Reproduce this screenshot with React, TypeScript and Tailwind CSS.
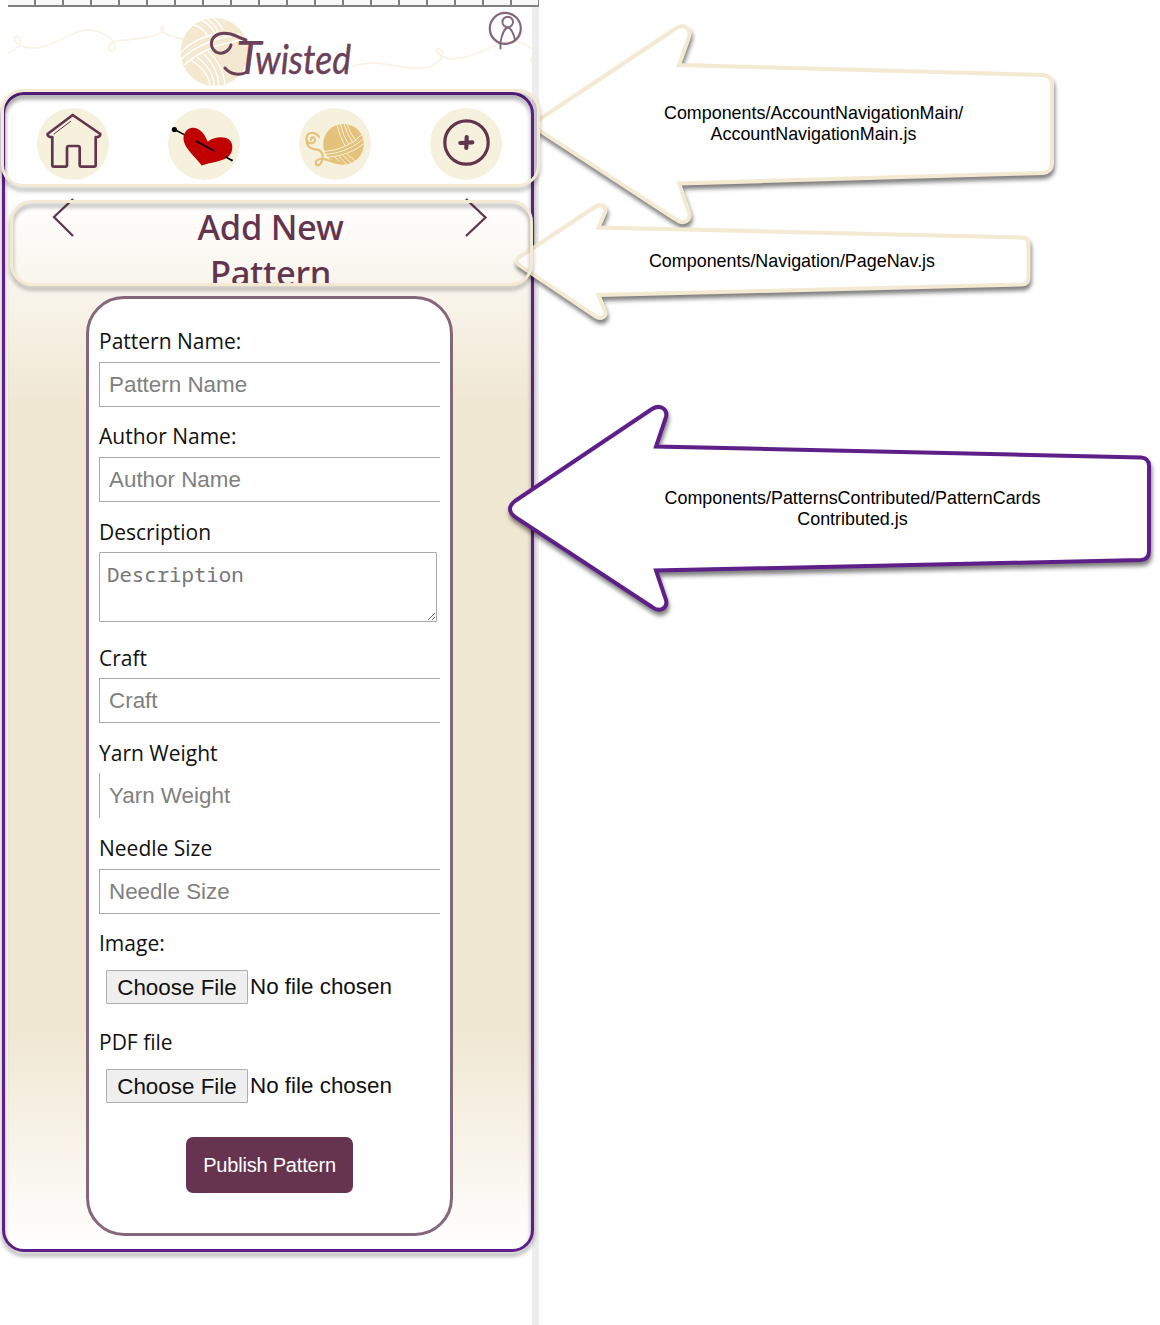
import React from "react";

const PLUM = "#63344e";

function Ruler() {
  return (
    <div className="ml-2 flex h-[7px] w-[531px] overflow-hidden border-b-2 border-[#808080] bg-[#f8f8f8]">
      {Array.from({ length: 19 }, (_, i) => (
        <div key={i} className="w-[28px] shrink-0 border-r-2 border-[#808080]" />
      ))}
    </div>
  );
}

function LogoHeader() {
  return (
    <svg className="block h-[86px] w-[532px]" viewBox="0 7 532 86">
      <g fill="none" stroke="#faf3e4" strokeWidth="1.7">
        <path d="M8 53 C16 50 22 44 20 39 C18 34 13 37 15 41 C19 48 31 48 37 48 C59 46 70 29 91 30 C103 31 115 40 115 47 C115 53 107 52 109 46 C112 39 124 41 135 39 C146 38 157 35 162 32 C165 29 162 24 161 29 C161 33 172 38 186 39" />
        <path d="M352 67 C378 57 398 70 424 68 C437 66 446 56 441 50 C437 46 434 51 440 55 C456 66 484 50 499 44 C512 39 523 42 532 49 M532 57 q-3 4 0 6" />
      </g>
      <circle cx="214.5" cy="52" r="34" fill="#f4e9d0" />
      <g fill="none" stroke="#fff" strokeWidth="1.4">
        <path d="M181 52 Q196 37 219 33 M181 59 Q204 39 240 34 M184 65 Q209 43 246 40" />
        <path d="M193 25 Q201 26 207 35 M201 20 Q209 23 215 33 M207 19 Q214 23 218 32 M213 18 Q219 22 223 30" />
        <path d="M191 60 Q209 72 210 86 M197 57 Q214 70 214 86 M204 54 Q218 68 219 86 M208 51 Q223 65 225 84" />
      </g>
      <g fill="none" stroke="#6b4059" strokeWidth="3" strokeLinecap="round">
        <path d="M231 45 C229 52 221 55 216 52 C209 47 210 37 219 34 C229 31 237 37 246 40" />
        <path d="M246 72.500 C238 76 230 74 225 68" />
      </g>
      <g fontFamily="Lato, sans-serif" fontStyle="italic" fill="#6b4059">
        <text x="236" y="73.500" fontSize="47">
          T
        </text>
        <text
          x="255"
          y="73.500"
          fontSize="40"
          stroke="#6b4059"
          strokeWidth="0.4"
          textLength="96"
          lengthAdjust="spacingAndGlyphs"
        >
          wisted
        </text>
      </g>
      <g fill="none" stroke="#83667b" strokeWidth="1.9" strokeLinecap="round">
        <circle cx="505.3" cy="28.4" r="15.5" strokeWidth="2.2" />
        <circle cx="507.7" cy="22" r="5.3" />
        <path d="M500.5 48.5 V42 C502 34 505 28 507.7 27.5 C511 28 514 34 515 40" />
      </g>
    </svg>
  );
}

function HomeIcon() {
  return (
    <svg className="size-[72px]" viewBox="37 108 72 72" fill="none" stroke={PLUM} strokeLinejoin="round" strokeLinecap="round">
      <path strokeWidth="2.7" d="M72.7 115 L47.5 134 Q47.5 137.3 52.3 137.2 V165 Q52.3 166.7 54 166.7 H65.3 Q67 166.7 67 165 V148 Q67 146 69 146 H78 Q79.7 146 79.7 148 V165 Q79.7 166.7 81.5 166.7 H94 Q95.7 166.7 95.7 165 V137.2 Q100.3 137.3 100.3 134 Z" />
      <path strokeWidth="1" d="M54 134 L70.7 121.3" />
    </svg>
  );
}

function HeartIcon() {
  return (
    <svg className="size-[72px]" viewBox="168 108 72 72" fill="none">
      <path fill="#c00000" d="M207.700 141.700 C204.500 132.500 198.500 127 192 127.700 C184.500 129 182.200 136.500 184.200 142.500 C187 150.500 195 156.500 201.700 165.500 C212 162 222 161.500 228 157 C233.500 152.500 233.800 143.500 229 139.500 C223 135.500 213 137.500 207.700 141.700Z" />
      <circle cx="174.400" cy="129.500" r="2.600" fill="#000" />
      <path stroke="#000" strokeWidth="1.500" d="M174.400 129.500 L184.300 134.700 M196 141 L214.500 151.200 M225 156.500 L232 160.500" />
      <circle cx="231.800" cy="160.300" r="1.100" fill="#000" />
    </svg>
  );
}

function YarnIcon() {
  return (
    <svg className="size-[72px]" viewBox="299 108 72 72" fill="none">
      <circle cx="343.500" cy="144.200" r="20.300" fill="#e5c27c" />
      <g stroke="#f6f1dc" strokeWidth="1">
        <path d="M337 125 Q340 137 345 146 M340.500 124 Q343 136 349 145 M344 124 Q347 134 353 143 M347 124.500 Q350 133 356 141" />
        <path d="M324 151.500 Q346 150 361.500 135 M325 154.500 Q347 153 363.500 139 M326 157.500 Q349 156 364 143.500" />
        <path d="M335 157 Q339 161 341 164 M339 156.500 Q344 161 346 164 M343 155.500 Q348 160 351 163 M347 154.500 Q352 158 355 161" />
      </g>
      <path
        stroke="#e5c27c"
        strokeWidth="2.200"
        strokeLinecap="round"
        d="M319 137 C315 131 307 132 306.500 138 C306 144 314 145 315 140.500 C315.500 136 310 137 311 140 M306.500 138 C306 150 314 149 319 150 C325 154 323 161 319.500 165 C315 167 314 160 320 159 C328 158 330 163 343 163.500"
      />
    </svg>
  );
}

function PlusIcon() {
  return (
    <svg className="size-[72px]" viewBox="430.500 108 72 72" fill="none" stroke={PLUM} strokeLinecap="round">
      <circle cx="467" cy="142.500" r="21.700" strokeWidth="3.200" />
      <path strokeWidth="4.200" d="M467.200 137 L466.800 148 M460.800 143 L472.800 142.400" />
    </svg>
  );
}

function AccountNavigation() {
  return (
    <nav className="flex h-[105px] justify-between pt-[15px] pr-[29.5px] pl-[37px]">
      {[HomeIcon, HeartIcon, YarnIcon, PlusIcon].map((Icon, i) => (
        <button key={i} className="size-[72px] rounded-full bg-[#f6f1dc]">
          <Icon />
        </button>
      ))}
    </nav>
  );
}

function PageNav() {
  return (
    <div className="flex h-[88px] items-start justify-between overflow-hidden pr-[44px] pl-[44px]">
      <svg className="h-[42px] w-[24px]" viewBox="52 198 24 42" fill="none" stroke={PLUM} strokeWidth="2.300">
        <path d="M73 199 L54 217 L73 236" />
      </svg>
      <h1 className="mt-[6px] ml-px w-[200px] text-center font-['Noto_Sans'] text-[34.5px] leading-[46px] font-medium tracking-[-0.3px] text-[#63344e]">
        Add New Pattern
      </h1>
      <svg className="h-[42px] w-[24px]" viewBox="464 198 24 42" fill="none" stroke={PLUM} strokeWidth="2.300">
        <path d="M466 199 L485.500 217.500 L466 236" />
      </svg>
    </div>
  );
}

function Label({ className, children }: { className: string; children: React.ReactNode }) {
  return (
    <label
      className={`flex items-end font-['Open_Sans'] text-[21px] leading-[30px] text-[#111] ${className}`}
    >
      {children}
    </label>
  );
}

function TextField({ name, line = true }: { name: string; line?: boolean }) {
  return (
    <input
      placeholder={name}
      className={`block h-[45px] w-[341px] border-l border-[#a9a9a9] bg-white pl-[9px] font-['Liberation_Sans'] text-[22.4px] outline-none placeholder:text-[#808080] ${line ? "border-y" : ""}`}
    />
  );
}

function FileField() {
  return (
    <div className="ml-[7px] flex h-[34px] items-center gap-[2px] font-['Liberation_Sans'] text-[22.4px] whitespace-nowrap text-[#111]">
      <button type="button" className="h-[34px] w-[142px] rounded-[1px] border border-[#adadad] bg-[#efefef]">
        Choose File
      </button>
      <span>No file chosen</span>
    </div>
  );
}

function PatternForm() {
  return (
    <form className="mt-[10px] ml-[78px] flex h-[940px] w-[367px] flex-col rounded-[38px] border-[3px] border-[#85677b] bg-white pl-[10px]">
      <Label className="h-[63px] pb-[6px]">Pattern Name:</Label>
      <TextField name="Pattern Name" />
      <Label className="h-[50px] pb-[6px]">Author Name:</Label>
      <TextField name="Author Name" />
      <Label className="h-[50px] pb-[5px]">Description</Label>
      <textarea
        placeholder="Description"
        className="block h-[70px] w-[338px] resize rounded-[1px] border border-[#a9a9a9] px-[7px] py-[7px] font-['Noto_Sans_Mono','DejaVu_Sans_Mono'] text-[20.7px] leading-[28px] outline-none placeholder:text-[#757575]"
      />
      <Label className="h-[56px] pb-[5px]">Craft</Label>
      <TextField name="Craft" />
      <Label className="h-[50px] pb-[5px]">Yarn Weight</Label>
      <TextField name="Yarn Weight" line={false} />
      <Label className="h-[51px] pb-[6px]">Needle Size</Label>
      <TextField name="Needle Size" />
      <Label className="h-[56px] pb-[12px]">Image:</Label>
      <FileField />
      <Label className="h-[65px] pb-[12px]">PDF file</Label>
      <FileField />
      <button
        type="button"
        className="mt-[34px] ml-[87px] h-[56px] w-[167px] rounded-[7px] bg-[#66344f] font-['Liberation_Sans'] text-[20px] tracking-[-0.2px] text-white"
      >
        Publish Pattern
      </button>
    </form>
  );
}

function Callout({ box, path, stroke, viewBox }: { box: string; path: string; stroke: string; viewBox: string }) {
  return (
    <svg
      className={`absolute drop-shadow-[1px_4px_2px_rgba(0,0,0,0.5)] ${box}`}
      viewBox={viewBox}
      fill="#fff"
      stroke={stroke}
      strokeWidth="4"
    >
      <path d={path} />
    </svg>
  );
}

function CalloutText({ className, children }: { className: string; children: React.ReactNode }) {
  return (
    <p
      className={`absolute text-center font-['Liberation_Sans'] text-[17.9px] leading-[21px] whitespace-nowrap text-black ${className}`}
    >
      {children}
    </p>
  );
}

export default function App() {
  return (
    <div className="relative h-[1325px] w-[1160px] overflow-hidden bg-white">
      <div className="flex h-full w-[539px] flex-col">
        <Ruler />
        <div className="flex-1 border-r-[7px] border-[#ededed]">
          <LogoHeader />
          <AccountNavigation />
          <main className="ml-2 h-[1052px] bg-[linear-gradient(to_bottom,#fff_0%,#f0e7d2_20%,#f0e7d2_79%,#fff_100%)]">
            <PageNav />
            <PatternForm />
          </main>
        </div>
      </div>

      <div className="absolute top-[92px] left-[2px] h-[1160px] w-[532px] rounded-[22px] border-[3px] border-[#5f1f88] drop-shadow-[0_4px_2px_rgba(0,0,0,0.4)]" />

      <div className="absolute top-0 left-[538px] h-[240px] w-[540px] overflow-hidden">
        <Callout
          box="top-0 -left-[8px] h-[240px] w-[540px]"
          viewBox="530 0 540 240"
          stroke="#f4e9d2"
          path="M534 123 L675 29 C683 23 692 28 689 37 L679 65 L1043 75 Q1052 76 1052 84 V163 Q1052 172 1043 173 L679 183.500 L689 212 C692 220 684 226 675 219 L534 127 Z"
        />
      </div>
      <Callout
        box="top-[190px] left-[505px] h-[145px] w-[540px]"
        viewBox="505 190 540 145"
        stroke="#f4e9d2"
        path="M519 257.500 L595 207 C601 203 607 206 605 212.500 L598.500 227.500 L1022 237.500 Q1028.500 238 1028.500 244 V278 Q1028.500 284 1022 284.500 L598.500 295 L605 311 C607 317 601 320 595 316 L519 265 Q514.500 261 519 257.500 Z"
      />
      <Callout
        box="top-[395px] left-[500px] h-[230px] w-[660px]"
        viewBox="500 395 660 230"
        stroke="#5f1f88"
        path="M515 501 L652 409 C660 404 668 409 666 417 L656 446.500 L1141 457.500 Q1149 458 1149 466 V551 Q1149 559.500 1141 560 L656 570.500 L666 600 C668 608 660 613 652 607 L515 517 Q505 509 515 501 Z"
      />

      <div className="absolute top-[89px] left-px h-[98px] w-[539px] rounded-[22px] border-[3px] border-[#f4e9d2] drop-shadow-[0_4px_2px_rgba(0,0,0,0.35)]" />
      <div className="absolute top-[200px] left-[10px] h-[86px] w-[523px] rounded-[22px] border-[3px] border-[#f4e9d2] drop-shadow-[0_4px_2px_rgba(0,0,0,0.35)]" />

      <CalloutText className="top-[103px] left-[664px] w-[299px]">
        Components/AccountNavigationMain/
        <br />
        AccountNavigationMain.js
      </CalloutText>
      <CalloutText className="top-[251px] left-[648px] w-[288px]">Components/Navigation/PageNav.js</CalloutText>
      <CalloutText className="top-[488px] left-[664px] w-[377px]">
        Components/PatternsContributed/PatternCards
        <br />
        Contributed.js
      </CalloutText>
    </div>
  );
}
